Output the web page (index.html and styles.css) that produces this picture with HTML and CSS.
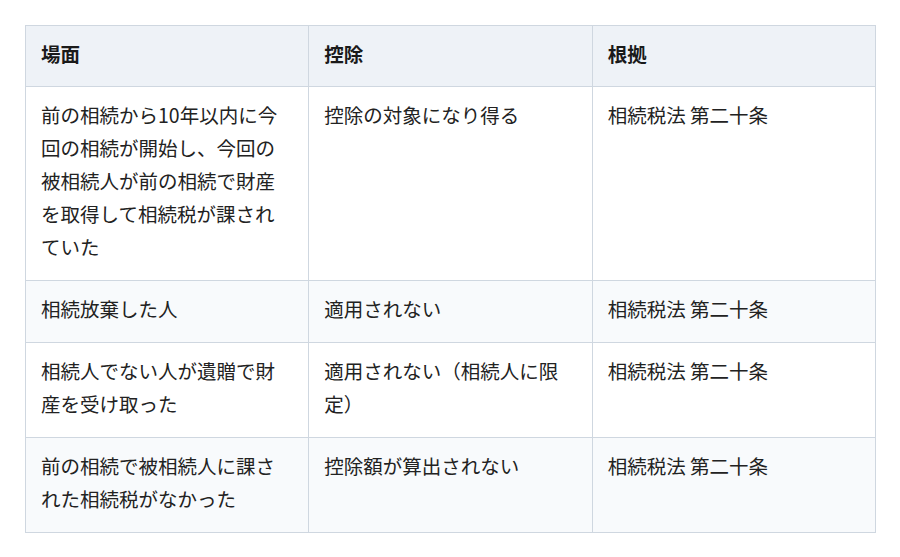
FILE: index.html
```html
<!DOCTYPE html>
<html lang="ja">
<head>
<meta charset="utf-8">
<link rel="stylesheet" href="styles.css">
</head>
<body>
<div class="wrap">
<table class="grid">
  <thead>
    <tr><th>場面</th><th>控除</th><th>根拠</th></tr>
  </thead>
  <tbody>
    <tr><td>前の相続から10年以内に今回の相続が開始し、今回の被相続人が前の相続で財産を取得して相続税が課されていた</td><td>控除の対象になり得る</td><td>相続税法 第二十条</td></tr>
    <tr class="alt"><td>相続放棄した人</td><td>適用されない</td><td>相続税法 第二十条</td></tr>
    <tr><td>相続人でない人が遺贈で財産を受け取った</td><td>適用されない（相続人に限定）</td><td>相続税法 第二十条</td></tr>
    <tr class="alt"><td>前の相続で被相続人に課された相続税がなかった</td><td>控除額が算出されない</td><td>相続税法 第二十条</td></tr>
  </tbody>
</table>
</div>
</body>
</html>
```
FILE: styles.css
```css
html, body {
  margin: 0;
  padding: 0;
  background: #ffffff;
}
.wrap {
  padding: 25px 24px 0 25px;
}
.grid {
  width: 851px;
  border-collapse: collapse;
  table-layout: fixed;
  font-family: "Noto Sans CJK JP", "Noto Sans", sans-serif;
  font-size: 19.5px;
  line-height: 33px;
  color: #222;
}
.grid th, .grid td {
  border: 1px solid #cfd7e0;
  padding: 11px 17px 17px 15px;
  text-align: left;
  vertical-align: top;
}
.grid th {
  padding-bottom: 16px;
  background: #eef2f7;
  font-weight: 700;
  color: #1a1a1a;
}
.grid tr.alt td {
  background: #f8fafc;
}
```
